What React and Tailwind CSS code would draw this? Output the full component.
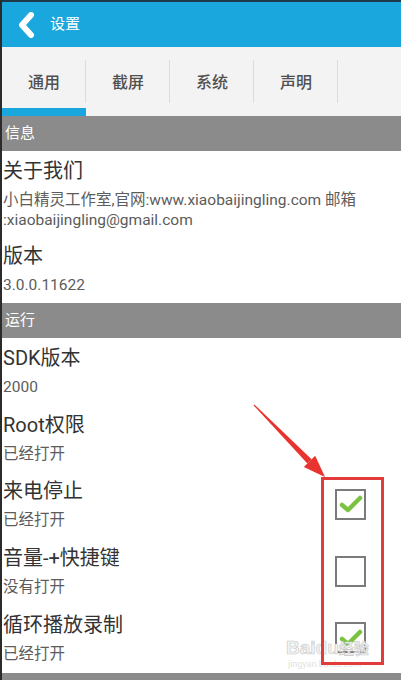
import React from "react";

const font = { fontFamily: "Roboto, 'Noto Sans CJK SC', sans-serif" };

function Check({ checked }) {
  return (
    <div className="w-[31px] h-[31px] border-2 border-[#7b7b7b] bg-white flex items-center justify-center">
      {checked && (
        <svg width="24" height="20" viewBox="0 0 24 20">
          <path d="M3 11 L9 16 L21 4" fill="none" stroke="#7cc242" strokeWidth="4.5" strokeLinecap="round" strokeLinejoin="round" />
        </svg>
      )}
    </div>
  );
}

function Row({ title, sub, check }) {
  return (
    <div className="h-[66.6px] flex items-center justify-between pr-[35px]">
      <div className="flex flex-col pt-[1px]">
        <div className="text-[20px] leading-[24px] text-[#333]">{title}</div>
        <div className="text-[15.5px] leading-[20px] text-[#5c5c5c] mt-[7px]">{sub}</div>
      </div>
      {check !== undefined && <Check checked={check} />}
    </div>
  );
}

function Header({ children }) {
  return (
    <div className="h-[35px] bg-[#8b8b8b] text-white text-[15px] flex items-center pl-[3px]">{children}</div>
  );
}

export default function App() {
  return (
    <div className="relative w-[401px] h-[680px] overflow-hidden bg-white flex flex-col border-l-2 border-[#2b2b2b]" style={font}>
      <div className="h-[2px] bg-[#1d3a4a]" />
      <div className="h-[45px] bg-[#1aa7dd] flex items-center">
        <svg width="22" height="26" viewBox="0 0 22 26" className="ml-[14px]">
          <path d="M15 3 L6 13 L15 23" fill="none" stroke="white" strokeWidth="6" strokeLinecap="round" strokeLinejoin="round" />
        </svg>
        <span className="ml-[12px] text-white text-[15px]">设置</span>
      </div>
      <div className="h-[69px] bg-[#f3f3f3] flex items-stretch relative">
        {["通用", "截屏", "系统", "声明"].map((t, i) => (
          <div key={t} className="w-[84px] relative flex items-center justify-center text-[16px] text-[#505050] font-medium pt-[3px]">
            {t}
            <div className="absolute right-0 top-[13px] h-[43px] w-px bg-[#dcdcdc]" />
            {i === 0 && <div className="absolute left-0 right-0 bottom-0 h-[8px] bg-[#1aa7dd]" />}
          </div>
        ))}
      </div>
      <Header>信息</Header>
      <div className="pl-[1px] flex flex-col">
        <div className="pt-[8px]">
          <div className="text-[20px] leading-[24px] text-[#333]">关于我们</div>
          <div className="text-[15.5px] leading-[20px] text-[#5c5c5c] mt-[7px] whitespace-nowrap">
            小白精灵工作室,官网:www.xiaobaijingling.com 邮箱
            <br />
            :xiaobaijingling@gmail.com
          </div>
        </div>
        <div className="pt-[14px]">
          <div className="text-[20px] leading-[24px] text-[#333]">版本</div>
          <div className="text-[15.5px] leading-[20px] text-[#5c5c5c] mt-[7px]">3.0.0.11622</div>
        </div>
      </div>
      <div className="h-[8px]" />
      <Header>运行</Header>
      <div className="pl-[1px] flex flex-col">
        <Row title="SDK版本" sub="2000" />
        <Row title="Root权限" sub="已经打开" />
        <Row title="来电停止" sub="已经打开" check={true} />
        <Row title="音量-+快捷键" sub="没有打开" check={false} />
        <Row title="循环播放录制" sub="已经打开" check={true} />
      </div>
      <div className="flex-1" />
      <div className="h-[7px] bg-[#8b8b8b]" />

      <div className="absolute left-[284px] top-[638px] text-[19px] leading-none text-[#f4f4f4] font-bold [-webkit-text-stroke:0.6px_#c8c8c8]" style={{ fontFamily: "'Liberation Sans', 'Noto Sans CJK SC', sans-serif" }}>
        Baidu<span className="text-[15px]">经验</span>
      </div>
      <div className="absolute left-[286px] top-[660px] text-[9px] leading-none text-[#e2e2e2]">jingyan.baidu.com</div>

      <div className="absolute left-[319px] top-[477px] w-[63px] h-[188px] border-[3px] border-[#e23b3b]" />
      <svg className="absolute left-0 top-0" width="401" height="680" viewBox="0 0 401 680">
        <polygon points="251.6,405.4 252.4,404.6 309.6,459.2 305.4,463.4" fill="#e8332f" />
        <polygon points="323,477 301.8,466.9 313.2,455.7" fill="#e8332f" />
      </svg>
    </div>
  );
}
